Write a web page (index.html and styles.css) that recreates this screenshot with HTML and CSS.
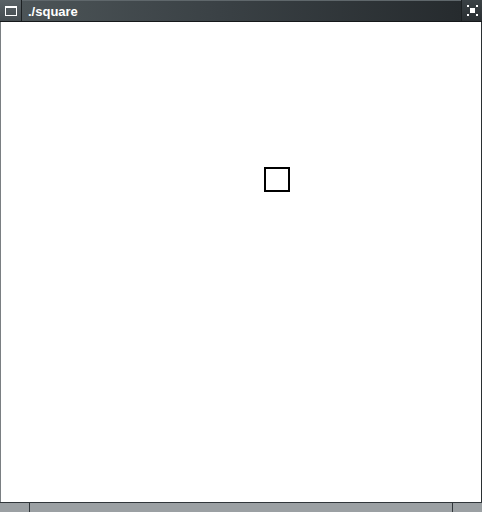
FILE: index.html
```html
<!DOCTYPE html>
<html>
<head>
<meta charset="utf-8">
<link rel="stylesheet" href="styles.css">
</head>
<body>
<div class="window">
  <div class="titlebar">
    <div class="btn btn-menu">
      <svg width="12" height="10" viewBox="0 0 12 10"><rect x="0.5" y="0.5" width="11" height="9" fill="none" stroke="#fff" stroke-width="1"/><rect x="0" y="0" width="12" height="2" fill="#fff"/></svg>
    </div>
    <div class="title">./square</div>
    <div class="btn btn-max">
      <svg width="11" height="11" viewBox="0 0 11 11" shape-rendering="crispEdges"><rect x="0" y="0" width="2" height="2" fill="#fff"/><rect x="9" y="0" width="2" height="2" fill="#fff"/><rect x="0" y="9" width="2" height="2" fill="#fff"/><rect x="9" y="9" width="2" height="2" fill="#fff"/><rect x="3" y="3" width="5" height="5" fill="#fff"/></svg>
    </div>
  </div>
  <div class="client">
    <div class="square"></div>
  </div>
  <div class="statusbar">
    <div class="grip grip-left"></div>
    <div class="grip grip-mid"></div>
    <div class="grip grip-right"></div>
  </div>
</div>
</body>
</html>
```
FILE: styles.css
```css
html, body {
  margin: 0;
  padding: 0;
  background: #fff;
}
.window {
  width: 482px;
  height: 512px;
  display: flex;
  flex-direction: column;
  box-sizing: border-box;
}
.titlebar {
  height: 22px;
  display: flex;
  gap: 1px;
  background: #1c2022;
  box-sizing: border-box;
  border-bottom: 1px solid #15181a;
}
.btn {
  width: 21px;
  display: flex;
  align-items: center;
  justify-content: center;
  background: linear-gradient(#5a6266, #454c50);
}
.btn-max {
  width: 20px;
  background: linear-gradient(#3a4145, #2a2f32);
}
.title {
  flex: 1;
  display: flex;
  align-items: center;
  padding-left: 6px;
  font-family: "Liberation Sans", Arial, sans-serif;
  font-weight: bold;
  font-size: 13px;
  color: #fff;
  background: linear-gradient(90deg, #4c5457 0%, #3a4145 45%, #262b2e 100%);
  border-top: 1px solid #5f676b;
}
.client {
  flex: 1;
  background: #fff;
  border-left: 1px solid #7a7f82;
  border-right: 1px solid #2a2f32;
  padding: 145px 0 0 263px;
}
.square {
  width: 22px;
  height: 21px;
  border: 2px solid #000;
}
.statusbar {
  height: 9px;
  display: flex;
  gap: 1px;
  background: #30363a;
  border-top: 1px solid #30363a;
  box-sizing: content-box;
}
.grip {
  background: #9ba0a3;
}
.grip-left { width: 29px; }
.grip-mid { flex: 1; }
.grip-right { width: 29px; }
```
